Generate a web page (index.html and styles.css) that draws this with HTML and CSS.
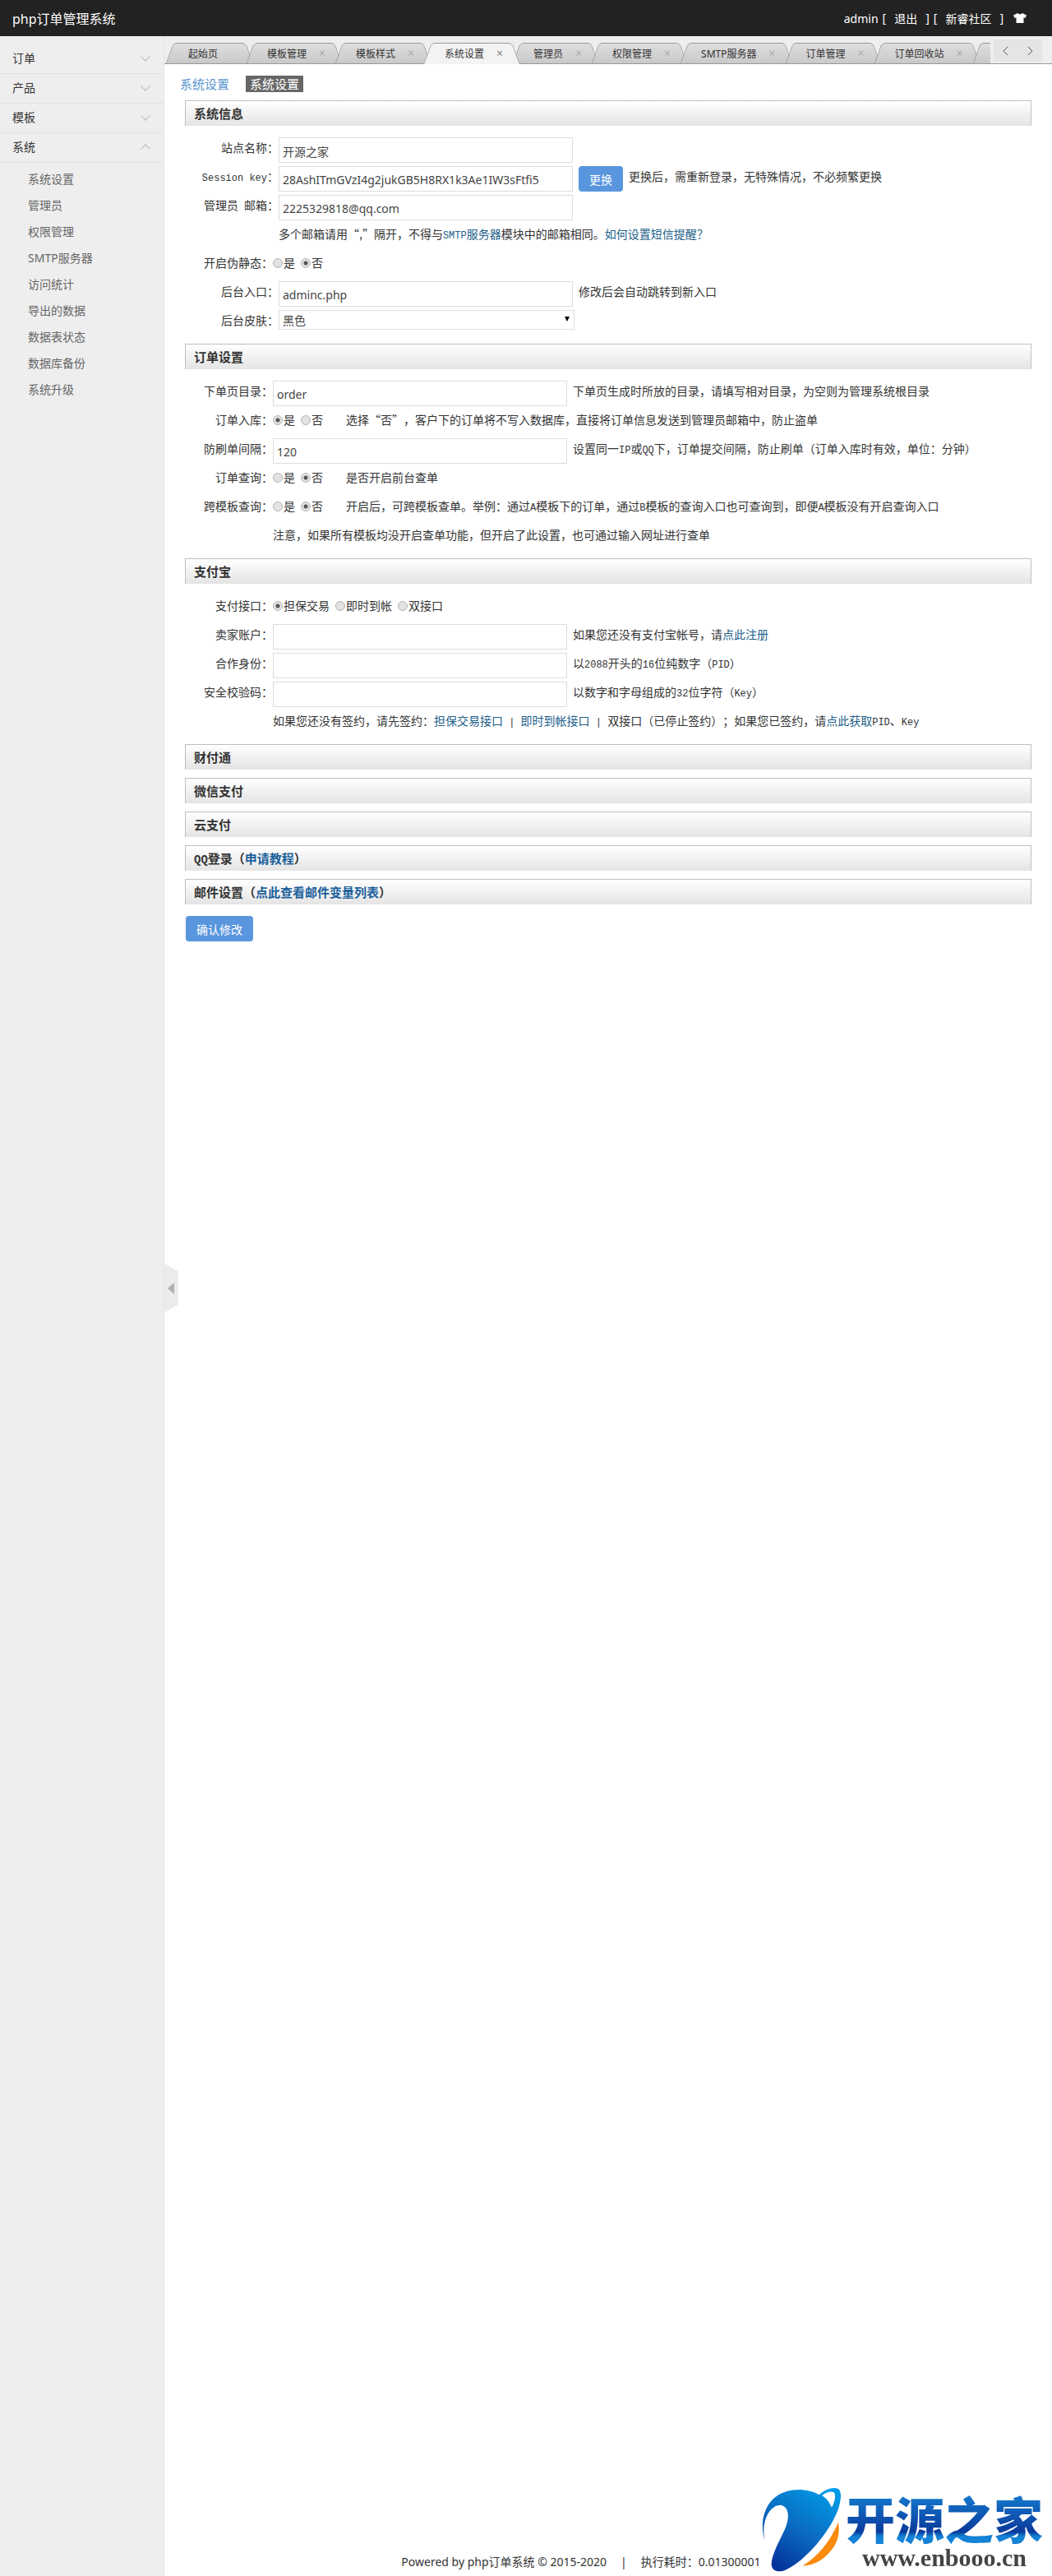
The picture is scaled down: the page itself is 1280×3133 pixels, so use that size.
FILE: index.html
```html
<!DOCTYPE html>
<html lang="zh-CN">
<head>
    <meta charset="UTF-8">
    <meta name="viewport" content="width=device-width, initial-scale=1.0">
    <title>php订单管理系统</title>
    <link rel="stylesheet" href="styles.css">
</head>
<body>
    <header class="topbar">
        <h1 class="brand">php订单管理系统</h1>
        <div class="user-links">
            <span>admin</span>
            <span class="bracket">[<a href="#">退出</a>]</span>
            <span class="bracket">[<a href="#">新睿社区</a>]</span>
            <button class="skin-btn" type="button" aria-label="换肤">
                <svg viewBox="0 0 16 12" width="16" height="12"><path fill="#fff" d="M5 0 Q8 2.500 11 0 L16 2.500 L14.500 6 L12.500 5.300 V12 H3.500 V5.300 L1.500 6 L0 2.500 Z"/></svg>
            </button>
        </div>
    </header>

    <div class="layout">
        <nav class="sidebar">
            <a class="menu-item" href="#">订单<i class="chevron"></i></a>
            <a class="menu-item" href="#">产品<i class="chevron"></i></a>
            <a class="menu-item" href="#">模板<i class="chevron"></i></a>
            <a class="menu-item" href="#">系统<i class="chevron up"></i></a>
            <ul class="submenu">
                <li><a href="#">系统设置</a></li>
                <li><a href="#">管理员</a></li>
                <li><a href="#">权限管理</a></li>
                <li><a href="#">SMTP服务器</a></li>
                <li><a href="#">访问统计</a></li>
                <li><a href="#">导出的数据</a></li>
                <li><a href="#">数据表状态</a></li>
                <li><a href="#">数据库备份</a></li>
                <li><a href="#">系统升级</a></li>
            </ul>
            <button class="collapse-btn" type="button" aria-label="收起菜单"></button>
        </nav>

        <div class="main">
            <div class="tabbar">
                <div class="tabs">
                    <div class="tab first"><a href="#">起始页</a></div>
                    <div class="tab"><a href="#">模板管理</a><button type="button">×</button></div>
                    <div class="tab"><a href="#">模板样式</a><button type="button">×</button></div>
                    <div class="tab active"><a href="#">系统设置</a><button type="button">×</button></div>
                    <div class="tab"><a href="#">管理员</a><button type="button">×</button></div>
                    <div class="tab"><a href="#">权限管理</a><button type="button">×</button></div>
                    <div class="tab"><a href="#">SMTP服务器</a><button type="button">×</button></div>
                    <div class="tab"><a href="#">订单管理</a><button type="button">×</button></div>
                    <div class="tab"><a href="#">订单回收站</a><button type="button">×</button></div>
                    <div class="tab"></div>
                </div>
                <div class="tab-nav">
                    <button type="button" aria-label="向左"><svg width="8" height="14" viewBox="0 0 8 14"><path d="M6 2 L1 7 L6 12"/></svg></button>
                    <button type="button" aria-label="向右"><svg width="8" height="14" viewBox="0 0 8 14"><path d="M2 2 L7 7 L2 12"/></svg></button>
                </div>
            </div>

            <form class="content">
                <div class="crumbs">
                    <a href="#">系统设置</a>
                    <span class="current">系统设置</span>
                </div>

                <h2>系统信息</h2>
                <div class="group">
                    <div class="row wide">
                        <label class="name" for="site">站点名称：</label>
                        <input class="text" id="site" type="text" value="开源之家">
                    </div>
                    <div class="row wide">
                        <label class="name" for="skey"><span class="en">Session key</span>：</label>
                        <input class="text" id="skey" type="text" value="28AshITmGVzI4g2jukGB5H8RX1k3Ae1IW3sFtfi5">
                        <button class="btn" type="button">更换</button>
                        <span>更换后，需重新登录，无特殊情况，不必频繁更换</span>
                    </div>
                    <div class="row wide">
                        <label class="name" for="email">管理员&ensp;邮箱：</label>
                        <input class="text" id="email" type="text" value="2225329818@qq.com">
                    </div>
                    <div class="row wide note">
                        <span>多个邮箱请用“,”隔开，不得与<a href="#"><span class="en">SMTP</span>服务器</a>模块中的邮箱相同。<a href="#">如何设置短信提醒？</a></span>
                    </div>
                    <div class="row">
                        <span class="name">开启伪静态：</span>
                        <span class="options">
                            <label><input type="radio" name="rewrite">是</label>
                            <label><input type="radio" name="rewrite" checked>否</label>
                        </span>
                    </div>
                    <div class="row wide">
                        <label class="name" for="entry">后台入口：</label>
                        <input class="text" id="entry" type="text" value="adminc.php">
                        <span>修改后会自动跳转到新入口</span>
                    </div>
                    <div class="row wide">
                        <label class="name" for="skin">后台皮肤：</label>
                        <span class="select"><select id="skin"><option>黑色</option></select></span>
                    </div>
                </div>

                <h2>订单设置</h2>
                <div class="group">
                    <div class="row">
                        <label class="name" for="dir">下单页目录：</label>
                        <input class="text" id="dir" type="text" value="order">
                        <span>下单页生成时所放的目录，请填写相对目录，为空则为管理系统根目录</span>
                    </div>
                    <div class="row">
                        <span class="name">订单入库：</span>
                        <span class="options">
                            <label><input type="radio" name="save" checked>是</label>
                            <label><input type="radio" name="save">否</label>
                        </span>
                        <span>选择“否”，客户下的订单将不写入数据库，直接将订单信息发送到管理员邮箱中，防止盗单</span>
                    </div>
                    <div class="row">
                        <label class="name" for="interval">防刷单间隔：</label>
                        <input class="text" id="interval" type="text" value="120">
                        <span>设置同一<span class="en">IP</span>或<span class="en">QQ</span>下，订单提交间隔，防止刷单（订单入库时有效，单位：分钟）</span>
                    </div>
                    <div class="row">
                        <span class="name">订单查询：</span>
                        <span class="options">
                            <label><input type="radio" name="query">是</label>
                            <label><input type="radio" name="query" checked>否</label>
                        </span>
                        <span>是否开启前台查单</span>
                    </div>
                    <div class="row">
                        <span class="name">跨模板查询：</span>
                        <span class="options">
                            <label><input type="radio" name="cross">是</label>
                            <label><input type="radio" name="cross" checked>否</label>
                        </span>
                        <span>开启后，可跨模板查单。举例：通过<span class="en">A</span>模板下的订单，通过<span class="en">B</span>模板的查询入口也可查询到，即便<span class="en">A</span>模板没有开启查询入口</span>
                    </div>
                    <div class="row note">
                        <span>注意，如果所有模板均没开启查单功能，但开启了此设置，也可通过输入网址进行查单</span>
                    </div>
                </div>

                <h2>支付宝</h2>
                <div class="group">
                    <div class="row">
                        <span class="name">支付接口：</span>
                        <span class="options">
                            <label><input type="radio" name="alipay" checked>担保交易</label>
                            <label><input type="radio" name="alipay">即时到帐</label>
                            <label><input type="radio" name="alipay">双接口</label>
                        </span>
                    </div>
                    <div class="row">
                        <label class="name" for="seller">卖家账户：</label>
                        <input class="text" id="seller" type="text">
                        <span>如果您还没有支付宝帐号，请<a href="#">点此注册</a></span>
                    </div>
                    <div class="row">
                        <label class="name" for="pid">合作身份：</label>
                        <input class="text" id="pid" type="text">
                        <span>以<span class="en">2088</span>开头的<span class="en">16</span>位纯数字（<span class="en">PID</span>）</span>
                    </div>
                    <div class="row">
                        <label class="name" for="key">安全校验码：</label>
                        <input class="text" id="key" type="text">
                        <span>以数字和字母组成的<span class="en">32</span>位字符（<span class="en">Key</span>）</span>
                    </div>
                    <div class="row note">
                        <span>如果您还没有签约，请先签约：<a href="#">担保交易接口</a><span class="en"> | </span><a href="#">即时到帐接口</a><span class="en"> | </span>双接口（已停止签约）；如果您已签约，请<a href="#">点此获取</a><span class="en">PID</span>、<span class="en">Key</span></span>
                    </div>
                </div>

                <div class="folded">
                    <h2>财付通</h2>
                    <h2>微信支付</h2>
                    <h2>云支付</h2>
                    <h2><span class="en">QQ</span>登录（<a href="#">申请教程</a>）</h2>
                    <h2>邮件设置（<a href="#">点此查看邮件变量列表</a>）</h2>
                </div>

                <button class="btn submit" type="submit">确认修改</button>
            </form>

            <footer class="footer">
                <span>Powered by php订单系统 © 2015-2020</span>
                <span>|</span>
                <span>执行耗时：0.013000011</span>
            </footer>
        </div>
    </div>

    <div class="watermark">
        <svg class="wm-logo" viewBox="80 70 300 320" width="100" height="107">
            <defs>
                <linearGradient id="orb" x1="0.8" y1="0" x2="0.2" y2="1">
                    <stop offset="0" stop-color="#009be6"/>
                    <stop offset="0.5" stop-color="#0a6cc0"/>
                    <stop offset="1" stop-color="#04309a"/>
                </linearGradient>
            </defs>
            <path fill="url(#orb)" fill-rule="evenodd" d="M94 272 C70 195 98 112 172 91 C215 78 262 86 292 103 C310 86 340 74 358 80 C376 86 374 122 360 160 C330 240 240 345 172 376 C145 388 122 384 118 360 C116 325 148 270 168 226 C184 188 184 148 152 141 C112 140 78 200 94 272 Z M302 106 C318 114 330 130 338 150 C350 128 354 102 346 94 C336 88 316 94 302 106 Z"/>
            <path fill="#f98a0c" d="M362 204 C368 240 362 276 336 306 C306 344 270 362 232 362 C290 328 334 270 362 204 Z"/>
        </svg>
        <div class="wm-text">
            <strong>开源之家</strong>
            <em>www.enbooo.cn</em>
        </div>
    </div>
</body>
</html>
```
FILE: styles.css
```css
* {
    box-sizing: border-box;
}

body {
    margin: 0;
    min-height: 100vh;
    display: flex;
    flex-direction: column;
    font-family: "Noto Sans", "Noto Sans CJK SC", sans-serif;
    font-size: 14px;
    text-spacing-trim: space-all;
    color: #333;
    background: #fff;
}

a {
    color: #205e88;
    text-decoration: none;
}

button {
    font: inherit;
    padding: 0;
    border: 0;
    background: none;
    cursor: pointer;
}

/* Top bar */
.topbar {
    height: 44px;
    padding: 0 31px 0 15px;
    background: #222;
    color: #fff;
    display: flex;
    justify-content: space-between;
    align-items: center;
}

.topbar a {
    color: #fff;
}

.brand {
    margin: 0;
    font-size: 16px;
    font-weight: normal;
}

.user-links {
    display: flex;
    align-items: center;
}

.bracket {
    display: flex;
    gap: 10px;
    margin-left: 5px;
}

.skin-btn {
    display: flex;
    margin-left: 12px;
}

.layout {
    flex: 1;
    display: flex;
}

/* Sidebar */
.sidebar {
    position: relative;
    flex: 0 0 200px;
    padding-top: 10px;
    background: #eee;
    border-right: 1px solid #e4e4e4;
}

.menu-item {
    display: flex;
    justify-content: space-between;
    height: 36px;
    padding: 0 18px 0 15px;
    border-bottom: 1px solid #e2e2e2;
    line-height: 34px;
    color: #333;
}

.chevron {
    width: 8px;
    height: 8px;
    margin-top: 11px;
    border: solid #bbb;
    border-width: 0 1px 1px 0;
    transform: rotate(45deg);
}

.chevron.up {
    margin-top: 15px;
    transform: rotate(225deg);
}

.submenu {
    list-style: none;
    margin: 0;
    padding: 4px 0;
}

.submenu a {
    display: block;
    padding-left: 34px;
    line-height: 32px;
    color: #666;
}

.collapse-btn {
    position: fixed;
    left: 200px;
    top: 50%;
    width: 17px;
    height: 60px;
    margin-top: -30px;
    background: #ebebeb;
    clip-path: polygon(0 0, 100% 10px, 100% 50px, 0 100%);
}

.collapse-btn::after {
    content: "";
    display: block;
    width: 0;
    margin-left: 4px;
    border: solid transparent;
    border-width: 7px 8px 7px 0;
    border-right-color: #b0b0b0;
}

/* Tabs */
.main {
    flex: 1;
    min-width: 0;
    display: flex;
    flex-direction: column;
}

.tabbar {
    height: 34px;
    background: #eee;
    border-bottom: 1px solid #999;
    display: flex;
    align-items: flex-end;
}

.tabs {
    flex: 1;
    min-width: 0;
    display: flex;
    overflow: hidden;
    padding-left: 6px;
    margin-bottom: -1px;
    isolation: isolate;
}

.tab {
    position: relative;
    flex: none;
    display: flex;
    align-items: center;
    height: 26px;
    min-width: 60px;
    padding: 0 14px 0 21px;
    font-size: 12px;
}

.tab.first {
    padding: 0 39px 0 23px;
}

/* sloped halves of a tab */
.tab::before,
.tab::after {
    content: "";
    position: absolute;
    z-index: -1;
    top: 0;
    bottom: 0;
    border: 1px solid #999;
    background: linear-gradient(#dedede, #c9c9c9);
}

.tab::before {
    left: 0;
    right: 50%;
    border-right: 0;
    border-radius: 5px 0 0 0;
    transform: skewX(-20deg);
}

.tab::after {
    left: 20%;
    right: 0;
    border-left: 0;
    border-radius: 0 5px 0 0;
    transform: skewX(20deg);
}

.tab.active::before,
.tab.active::after {
    z-index: 0;
    background: #f3f3f3;
    border-bottom-color: #f3f3f3;
}

.tab a {
    position: relative;
    z-index: 1;
    color: #333;
}

.tab button {
    position: relative;
    z-index: 1;
    width: 12px;
    margin-left: 13px;
    font-size: 14px;
    line-height: 14px;
    color: #aaa;
}

.tab.active button {
    color: #888;
}

.tab-nav {
    flex: none;
    display: flex;
    justify-content: space-around;
    align-items: center;
    width: 59px;
    height: 27px;
    margin: 0 12px 2px 4px;
    background: #e5e5e5;
}

.tab-nav button {
    display: flex;
}

.tab-nav path {
    fill: none;
    stroke: #555;
}

/* Settings form */
.content {
    flex: 1;
    padding: 14px 25px 0;
    font-family: "Noto Sans CJK SC", sans-serif;
}

.en {
    font-family: "Liberation Mono", monospace;
    font-size: 12px;
    white-space: pre;
}

.crumbs {
    display: flex;
    gap: 20px;
    margin: 0 0 10px -6px;
    font-size: 15px;
    line-height: 20px;
}

.crumbs a {
    color: #5b96cf;
}

.crumbs .current {
    padding: 0 5px;
    background: #666;
    color: #fff;
}

h2 {
    height: 31px;
    margin: 0;
    padding-left: 10px;
    border: 1px solid #bfbfbf;
    border-bottom: 0;
    background: linear-gradient(#fff, #e4e4e4);
    font-size: 15px;
    line-height: 30px;
}

h2 .en {
    font-size: 14px;
}

h2 a {
    color: #1c609c;
}

.group {
    padding: 12px 0 8px;
}

.row {
    display: flex;
    align-items: flex-start;
    gap: 7px;
    height: 35px;
    line-height: 28px;
    white-space: nowrap;
}

.row .name {
    flex: none;
    width: 107px;
    margin-right: -7px;
    text-align: right;
}

.row.wide .name {
    width: 114px;
}

.row.note {
    padding-left: 107px;
}

.row.wide.note {
    padding-left: 114px;
}

.text,
select {
    border: 1px solid #ddd;
    background: #fff;
    padding: 0 4px;
    font: 14px "Noto Sans", "Noto Sans CJK SC", sans-serif;
    color: #444;
}

.text {
    width: 358px;
    height: 31px;
    margin-top: 2px;
    padding-top: 2px;
}

.select {
    position: relative;
    display: flex;
    margin-top: 2px;
}

.select::after {
    content: "";
    position: absolute;
    right: 6px;
    top: 8px;
    border: solid transparent;
    border-width: 6px 3px 0;
    border-top-color: #000;
}

select {
    appearance: none;
    width: 360px;
    height: 24px;
}

.options {
    display: flex;
    gap: 7px;
    margin-right: 21px;
}

.options label {
    display: flex;
    align-items: center;
}

.options input {
    appearance: none;
    width: 12px;
    height: 12px;
    margin: 2px 1px 0 0;
    border: 1px solid #b5b5b5;
    border-radius: 50%;
    background: #e2e2e2;
}

.options input:checked {
    background: radial-gradient(circle, #555 0, #555 2px, #e2e2e2 3px);
}

.btn {
    height: 31px;
    margin-top: 2px;
    padding: 0 13px;
    border-radius: 4px;
    background: #5996de;
    color: #fff;
    line-height: 30px;
}

.folded {
    display: grid;
    gap: 10px;
}

.submit {
    margin: 14px 0 0 1px;
}

.footer {
    display: flex;
    justify-content: center;
    gap: 17px;
    padding: 0 58px 2px 0;
    line-height: 30px;
}

/* Corner watermark */
.watermark {
    position: fixed;
    right: 0;
    bottom: 0;
    display: flex;
    width: 354px;
    height: 110px;
    background: #fff;
}

.wm-logo {
    flex: none;
}

.wm-text {
    display: flex;
    flex-direction: column;
    align-items: center;
    padding: 5px 0 0 3px;
}

.wm-text strong {
    font: 900 60px/68px "Noto Sans CJK SC", sans-serif;
    color: transparent;
    background: linear-gradient(#1583d6, #0b3a9c 75%, #1383d6 84%);
    background-clip: text;
}

.wm-text em {
    font: bold 30px/30px "Liberation Serif", serif;
    color: #444;
}
```
